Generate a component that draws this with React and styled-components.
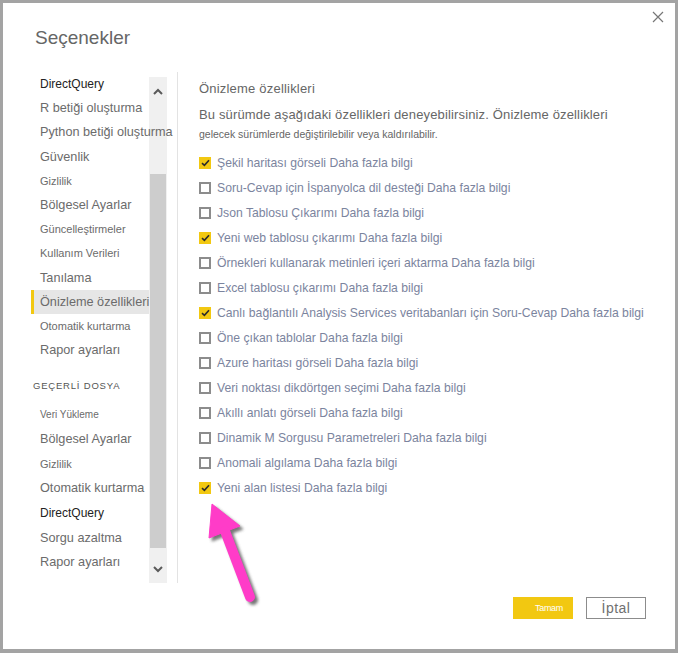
import styled, { createGlobalStyle } from 'styled-components';

const GlobalStyle = createGlobalStyle`
  html, body {
    margin: 0;
    padding: 0;
    background: #ffffff;
  }
  body {
    font-family: "Liberation Sans", Arial, sans-serif;
  }
`;

const Frame = styled.div`
  position: relative;
  box-sizing: border-box;
  width: 678px;
  height: 653px;
  border-style: solid;
  border-color: #a3a3a3;
  border-width: 3px 3px 4px 3px;
  background: #ffffff;
  display: flex;
  flex-direction: column;
`;

const Header = styled.div`
  height: 69px;
  padding: 24px 0 0 32px;
  box-sizing: border-box;
`;

const Title = styled.h1`
  margin: 0;
  font-size: 19px;
  line-height: 22px;
  font-weight: 400;
  color: #666666;
`;

const Close = styled.button`
  position: absolute;
  top: 5px;
  right: 8px;
  width: 18px;
  height: 18px;
  padding: 0;
  border: 0;
  background: transparent;
  display: flex;
  align-items: center;
  justify-content: center;
`;

const Body = styled.div`
  display: flex;
  height: 511px;
`;

const Sidebar = styled.div`
  display: flex;
  margin-left: 28px;
  height: 511px;
`;

const NavList = styled.div`
  position: relative;
  z-index: 1;
  width: 118px;
  display: flex;
  flex-direction: column;
`;

const NavItem = styled.div`
  height: ${(p) => p.h || 24.2}px;
  display: flex;
  align-items: center;
  box-sizing: border-box;
  padding-left: ${(p) => (p.active ? 6 : 9)}px;
  border-left: ${(p) => (p.active ? '3px solid #f2c811' : '0')};
  background: ${(p) => (p.active ? '#e6e6e6' : 'transparent')};
  font-size: ${(p) => p.size}px;
  color: ${(p) => (p.dark ? '#222222' : '#6b6b6b')};
  white-space: nowrap;
`;

const SectionLabel = styled.div`
  height: 40px;
  padding: 12px 0 0 2px;
  box-sizing: border-box;
  font-size: 9.5px;
  letter-spacing: 0.8px;
  color: #555555;
  line-height: 24px;
`;

const ScrollTrack = styled.div`
  width: 18px;
  margin-top: 5px;
  background: #f0f0f0;
  display: flex;
  flex-direction: column;
  align-items: center;
`;

const ScrollButton = styled.div`
  height: 28px;
  width: 100%;
  display: flex;
  align-items: center;
  justify-content: center;
`;

const ScrollArea = styled.div`
  flex: 1;
  width: 100%;
  padding: 69px 1px 0 1px;
  box-sizing: border-box;
`;

const Thumb = styled.div`
  height: 374px;
  background: #cdcdcd;
`;

const Divider = styled.div`
  width: 1px;
  background: #e3e3e3;
  margin-left: 10px;
`;

const Content = styled.div`
  padding: 8px 0 0 21px;
  display: flex;
  flex-direction: column;
`;

const Heading = styled.div`
  font-size: 13px;
  line-height: 18px;
  color: #666666;
  letter-spacing: 0.2px;
`;

const Lead = styled.div`
  margin-top: 8px;
  font-size: 13px;
  line-height: 18px;
  color: #666666;
  letter-spacing: 0.15px;
`;

const Small = styled.div`
  margin-top: 2px;
  font-size: 10.5px;
  line-height: 16px;
  color: #666666;
  margin-bottom: 8px;
`;

const Row = styled.label`
  height: 25px;
  display: flex;
  align-items: center;
  gap: 6px;
  font-size: 12.2px;
  color: #7b849e;
  white-space: nowrap;
`;

const Box = styled.span`
  width: 12px;
  height: 12px;
  box-sizing: border-box;
  flex: none;
  display: flex;
  align-items: center;
  justify-content: center;
  background: ${(p) => (p.checked ? '#f2c811' : '#ffffff')};
  border: ${(p) => (p.checked ? '0' : '2px solid #8c8c8c')};
`;

const Footer = styled.div`
  flex: 1;
  display: flex;
  justify-content: flex-end;
  align-items: flex-start;
  gap: 13px;
  padding: 14px 29px 0 0;
`;

const Button = styled.button`
  width: 60px;
  height: 22px;
  padding: ${(p) => (p.primary ? '0 0 0 12px' : '0')};
  box-sizing: border-box;
  font-family: inherit;
  background: ${(p) => (p.primary ? '#f2c811' : '#ffffff')};
  border: ${(p) => (p.primary ? '0' : '1px solid #8c8c8c')};
  color: ${(p) => (p.primary ? '#ffffff' : '#707070')};
  font-size: ${(p) => (p.primary ? '9px' : '14px')};
  letter-spacing: ${(p) => (p.primary ? '-0.3px' : '0.5px')};
`;

const Pointer = styled.svg`
  position: absolute;
  left: 192px;
  top: 492px;
`;

const topNav = [
  ['DirectQuery', 12, true],
  ['R betiği oluşturma', 12.7],
  ['Python betiği oluşturma', 12.7],
  ['Güvenlik', 12.7],
  ['Gizlilik', 11],
  ['Bölgesel Ayarlar', 12.7],
  ['Güncelleştirmeler', 11],
  ['Kullanım Verileri', 11],
  ['Tanılama', 12.7],
  ['Önizleme özellikleri', 12.7, false, true],
  ['Otomatik kurtarma', 11],
  ['Rapor ayarları', 12.7],
];

const fileNav = [
  ['Veri Yükleme', 10],
  ['Bölgesel Ayarlar', 12.7],
  ['Gizlilik', 11],
  ['Otomatik kurtarma', 12.7],
  ['DirectQuery', 12, true],
  ['Sorgu azaltma', 12.7],
  ['Rapor ayarları', 12.7],
];

const features = [
  ['Şekil haritası görseli', true],
  ['Soru-Cevap için İspanyolca dil desteği', false],
  ['Json Tablosu Çıkarımı', false],
  ['Yeni web tablosu çıkarımı', true],
  ['Örnekleri kullanarak metinleri içeri aktarma', false],
  ['Excel tablosu çıkarımı', false],
  ['Canlı bağlantılı Analysis Services veritabanları için Soru-Cevap', true],
  ['Öne çıkan tablolar', false],
  ['Azure haritası görseli', false],
  ['Veri noktası dikdörtgen seçimi', false],
  ['Akıllı anlatı görseli', false],
  ['Dinamik M Sorgusu Parametreleri', false],
  ['Anomali algılama', false],
  ['Yeni alan listesi', true],
];

const Check = () => (
  <svg width="9" height="8" viewBox="0 0 9 8">
    <path d="M1 4.2 L3.4 6.4 L8 1.2" fill="none" stroke="#2b2b2b" strokeWidth="1.6" />
  </svg>
);

export default function App() {
  return (
    <>
      <GlobalStyle />
      <Frame>
        <Header>
          <Title>Seçenekler</Title>
        </Header>
        <Close aria-label="Kapat">
          <svg width="12" height="12" viewBox="0 0 12 12">
            <path d="M1 1 L11 11 M11 1 L1 11" stroke="#777777" strokeWidth="1.2" />
          </svg>
        </Close>
        <Body>
          <Sidebar>
            <NavList>
              {topNav.map(([label, size, dark, active]) => (
                <NavItem key={label} size={size} dark={dark} active={active}>
                  {label}
                </NavItem>
              ))}
              <SectionLabel>GEÇERLİ DOSYA</SectionLabel>
              {fileNav.map(([label, size, dark], i) => (
                <NavItem key={label + i} size={size} dark={dark} h={24.6}>
                  {label}
                </NavItem>
              ))}
            </NavList>
            <ScrollTrack>
              <ScrollButton>
                <svg width="10" height="7" viewBox="0 0 10 7">
                  <path d="M1 6 L5 2 L9 6" fill="none" stroke="#5a5a5a" strokeWidth="2" />
                </svg>
              </ScrollButton>
              <ScrollArea>
                <Thumb />
              </ScrollArea>
              <ScrollButton>
                <svg width="10" height="7" viewBox="0 0 10 7">
                  <path d="M1 1 L5 5 L9 1" fill="none" stroke="#5a5a5a" strokeWidth="2" />
                </svg>
              </ScrollButton>
            </ScrollTrack>
          </Sidebar>
          <Divider />
          <Content>
            <Heading>Önizleme özellikleri</Heading>
            <Lead>Bu sürümde aşağıdaki özellikleri deneyebilirsiniz. Önizleme özellikleri</Lead>
            <Small>gelecek sürümlerde değiştirilebilir veya kaldırılabilir.</Small>
            {features.map(([label, checked]) => (
              <Row key={label}>
                <Box checked={checked}>{checked && <Check />}</Box>
                <span>{label} Daha fazla bilgi</span>
              </Row>
            ))}
          </Content>
        </Body>
        <Footer>
          <Button primary>Tamam</Button>
          <Button>İptal</Button>
        </Footer>
        <Pointer width="80" height="120" viewBox="0 0 80 120">
          <defs>
            <filter id="shadow" x="-30%" y="-30%" width="160%" height="160%">
              <feGaussianBlur stdDeviation="1.6" />
            </filter>
          </defs>
          <g transform="translate(3 3)" fill="#555555" stroke="#555555" filter="url(#shadow)" opacity="0.8">
            <polygon points="17,9 14,43 45,31" />
            <line x1="30" y1="36" x2="55" y2="102" strokeWidth="10" strokeLinecap="round" />
          </g>
          <g fill="#ff3cc8" stroke="#ff3cc8">
            <polygon points="17,9 14,43 45,31" strokeLinejoin="round" />
            <line x1="30" y1="36" x2="55" y2="102" strokeWidth="10" strokeLinecap="round" />
          </g>
        </Pointer>
      </Frame>
    </>
  );
}
